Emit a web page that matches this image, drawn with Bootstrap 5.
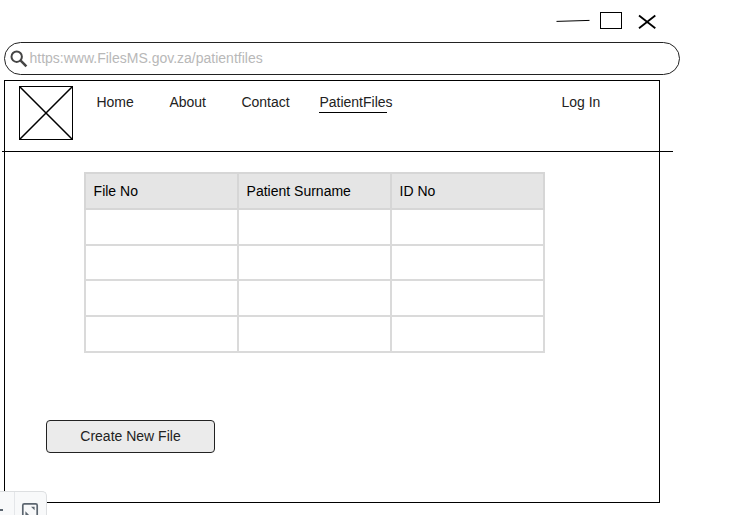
<!DOCTYPE html>
<html lang="en">
<head>
<meta charset="utf-8">
<meta name="viewport" content="width=device-width, initial-scale=1">
<title>Patient Files</title>
<link href="https://cdn.jsdelivr.net/npm/bootstrap@5.3.0/dist/css/bootstrap.min.css" rel="stylesheet">
<style>
  body { font-family: "Liberation Sans", Arial, sans-serif; font-size: 14px; line-height: 16px; color: #222; background: #fff; height: 515px; }
  svg { display: block; }
  .titlebar { height: 42px; padding: 11px 83px 0 0; }
  .addressbar { width: 676px; height: 33px; margin-left: 4px; border: 1px solid #222; border-radius: 17px; padding: 0 0 0 5px; color: #b8b8b8; }
  .address-text { margin: 0 0 2px 1.5px; }
  .page-frame { width: 656px; height: 423px; margin: 5px 0 0 4px; border: 1px solid #000; }
  .site-nav { height: 71px; width: 671px; margin-left: -3px; padding: 5px 0 0 17px; border-bottom: 1px solid #000; }
  .site-nav .nav-link { color: #222; line-height: 16px; white-space: nowrap; }
  .site-links { padding-top: 8px; margin-left: 23.4px; }
  .link-home { width: 73px; }
  .link-about { width: 72px; }
  .link-contact { width: 78px; }
  .link-files { width: 242px; }
  .active-line { width: 68px; height: 1px; background: #000; margin-top: 2px; }
  .files-grid { width: 461px; height: 181px; margin: 20px 0 0 79px; color: #000; }
  .files-table { width: 461px; table-layout: fixed; border-collapse: collapse; }
  .files-table th, .files-table td { border: 2px solid #dadada; padding: 0 8px 0 7.6px; font-weight: 400; }
  .files-table th { background: #e5e5e5; border-color: #d6d6d6; }
  .create-btn { width: 169px; height: 33px; margin: 67px 0 0 41px; padding: 0 0 2px; background: #ebebeb; border: 1px solid #222; border-radius: 4px; color: #222; font-size: 14px; line-height: 16px; }
  .create-btn:hover { background: #e2e2e2; border-color: #222; color: #222; }
  .zoom-tools { width: 47px; height: 24px; background: #f8f9fa; border: 1px solid #dddfe1; border-width: 1px 1px 0 0; border-radius: 0 5px 0 0; }
  .zoom-out { width: 15px; height: 23px; border-right: 1px solid #e4e6e9; padding-top: 17px; }
</style>
</head>
<body class="overflow-hidden position-relative">
  <div class="titlebar d-flex justify-content-end">
    <svg width="101" height="20" viewBox="556 11 101 20" fill="none" stroke="#000" role="img" aria-label="Window controls">
      <path d="M556.5 21.4L589.5 20.4" stroke-width="1"/>
      <rect x="600.5" y="12.5" width="21" height="16"/>
      <path d="M639 15.5L655.3 28.2M655.3 15.5L639 28.2" stroke-width="1.8"/>
    </svg>
  </div>
  <div class="addressbar d-flex align-items-center">
    <svg width="18" height="18" viewBox="0 0 18 18" fill="none" stroke="#444" aria-hidden="true">
      <circle cx="6.7" cy="6.7" r="5.2" stroke-width="2"/>
      <path d="M10.7 10.7L16.4 16.4" stroke-width="2.5"/>
    </svg>
    <span class="address-text">https:www.FilesMS.gov.za/patientfiles</span>
  </div>

  <div class="page-frame">
    <nav class="site-nav d-flex align-items-start">
      <svg width="54" height="54" viewBox="0 0 54 54" fill="none" stroke="#000" role="img" aria-label="Logo">
        <rect x=".5" y=".5" width="53" height="53"/>
        <path d="M.5 .5L53.5 53.5M53.5 .5L.5 53.5" stroke-width="1.5"/>
      </svg>
      <div class="site-links d-flex">
        <a class="nav-link p-0 link-home" href="#">Home</a>
        <a class="nav-link p-0 link-about" href="#">About</a>
        <a class="nav-link p-0 link-contact" href="#">Contact</a>
        <a class="nav-link p-0 link-files" href="#" aria-current="page">PatientFiles<div class="active-line"></div></a>
        <a class="nav-link p-0" href="#">Log In</a>
      </div>
    </nav>

    <div class="files-grid">
      <table class="files-table">
        <thead><tr height="36"><th>File No</th><th>Patient Surname</th><th>ID No</th></tr></thead>
        <tbody>
          <tr height="36"><td></td><td></td><td></td></tr>
          <tr height="35"><td></td><td></td><td></td></tr>
          <tr height="36"><td></td><td></td><td></td></tr>
          <tr height="36"><td></td><td></td><td></td></tr>
        </tbody>
      </table>
    </div>

    <button type="button" class="btn create-btn d-block">Create New File</button>
  </div>

  <div class="zoom-tools d-flex position-absolute bottom-0 start-0">
    <div class="zoom-out">
      <svg width="3" height="2" viewBox="0 0 3 2" aria-hidden="true"><path d="M0 1H3" stroke="#5c6670" stroke-width="2"/></svg>
    </div>
    <svg class="ms-auto" width="31" height="23" viewBox="15 492 31 23" fill="none" stroke="#5c6670" aria-hidden="true">
      <rect x="22.8" y="503.8" width="14.4" height="15" rx="1.5" stroke-width="1.7"/>
      <path d="M31 506.7H34.6V510.3ZM25.4 511.2V515.5H29.5Z" fill="#5c6670" stroke="none"/>
    </svg>
  </div>
<script src="https://cdn.jsdelivr.net/npm/bootstrap@5.3.0/dist/js/bootstrap.bundle.min.js"></script>
</body>
</html>
